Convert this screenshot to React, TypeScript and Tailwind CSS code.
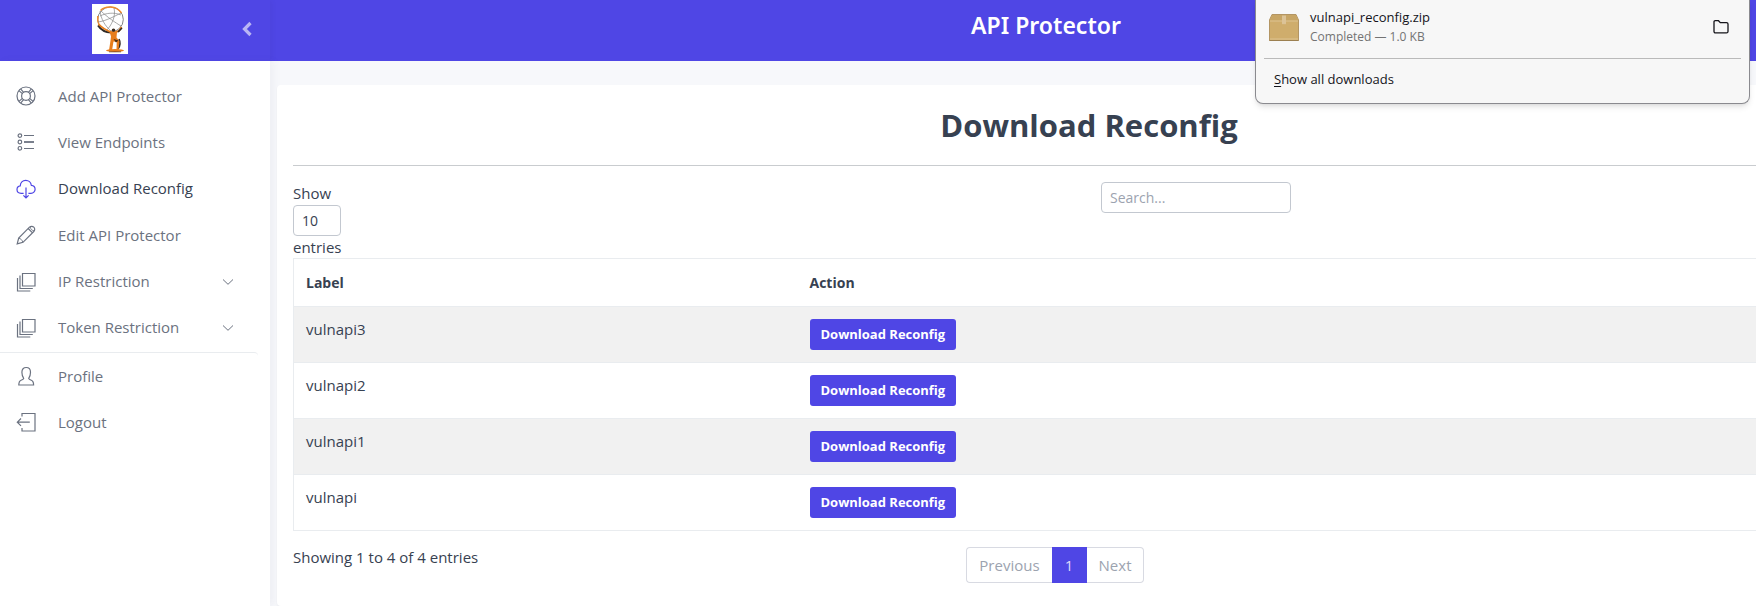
import React from "react";

type IconProps = { className?: string };

function Svg({ className = "", children }: IconProps & { children: React.ReactNode }) {
  return (
    <svg viewBox="0 0 20 20" className={`h-5 w-5 shrink-0 ${className}`} fill="none" stroke="currentColor" strokeWidth="1.2" aria-hidden="true">
      {children}
    </svg>
  );
}

const LifebuoyIcon = () => (
  <Svg>
    <circle cx="10" cy="10" r="9" />
    <circle cx="10" cy="10" r="4.4" />
    <path d="M2.9 4.6 6.4 7.6M4.6 2.9 7.6 6.3M15.4 2.9 12.4 6.3M17.1 4.6 13.6 7.6M2.9 15.4 6.4 12.4M4.6 17.1 7.6 13.7M15.4 17.1 12.4 13.7M17.1 15.4 13.6 12.4" />
  </Svg>
);

const ListIcon = () => (
  <Svg>
    <circle cx="3.9" cy="3.6" r="1.8" />
    <circle cx="3.9" cy="10" r="1.8" />
    <circle cx="3.9" cy="16.3" r="1.8" />
    <path d="M8 3.5h10M8 16.5h10" />
    <path d="M8 10h10" strokeWidth="1.8" />
  </Svg>
);

const CloudDownloadIcon = () => (
  <Svg className="text-[#4f46e5]">
    <path d="M7.6 14.3H5.2C2.8 14.3 1 12.7 1 10.5c0-2 1.5-3.5 3.3-3.7C4.3 3.7 6.6 1.4 9.7 1.4c2.9 0 5.3 2.1 5.6 4.9 2.2.2 3.8 1.9 3.8 4 0 2.3-1.8 4-4.1 4h-2.6" />
    <path d="M10 8.5v10.3M7.4 16.3 10 18.9l2.6-2.6" />
  </Svg>
);

const PencilIcon = () => (
  <Svg>
    <path d="M1.2 18.8 2.7 13 13.5 2.2a3 3 0 0 1 4.3 4.3L7 17.3zM12.2 3.5l4.3 4.3" />
    <path d="M14.3 2.1c.3 2 1.5 3.3 3.6 3.6" strokeWidth=".9" />
    <path d="M2.8 13.2c1.8.3 3.5 1.9 4 4" strokeWidth=".9" />
  </Svg>
);

const StackIcon = () => (
  <Svg>
    <path d="M6.500 1.500h12.500v12.500h-12.500zM4 3.500v13h12.800M1.500 6v13h12.800" />
  </Svg>
);

const UserIcon = () => (
  <Svg>
    <path d="M7.700 12.300C6.500 10.900 5.900 9 5.900 6.300 5.900 3.200 7.500 1.500 10.200 1.500s4.300 1.700 4.300 4.800c0 2.700-.6 4.600-1.800 6 .2.900 1 1.300 2.600 1.900 1.700.6 2.300 1.300 2.300 4.800H2.800c0-3.500.6-4.200 2.300-4.800 1.600-.6 2.400-1 2.600-1.900z" />
  </Svg>
);

const LogoutIcon = () => (
  <Svg>
    <path d="M6 4.500v-3h13v17.500H6v-3M1.300 10.200h12.500M5 6.500 1.300 10.200 5 13.900" />
  </Svg>
);

const Logo = () => (
  <svg viewBox="0 0 36 50" className="h-[50px] w-9" role="img" aria-label="Atlas logo">
    <rect width="36" height="50" fill="#fff" />
    <g fill="none">
      <ellipse cx="18.500" cy="15.500" rx="12.800" ry="12.500" stroke="#777" strokeWidth=".9" />
      <path d="M5.800 12C5.300 16 6 19 7.500 22M8.500 6.500C13 2 24 1 29.500 9" stroke="#f08a2c" strokeWidth="1.500" />
      <path d="M6 18C14 17 23 12 29 9M9 7C15 13 24 19 29 22M14 27C20 21 24 12 22 4M8 7C9 15 13 22 19 27M8 12C14 9 22 8 29 11" stroke="#858585" strokeWidth=".7" />
      <path d="M6 21.500C9 26 14 28.500 19 28.500" stroke="#2f2a26" strokeWidth="2" />
      <path d="M7 20.500C10 24 15 26.500 20 28.500M22 28.500 27 27 29.500 23" stroke="#e87d1b" strokeWidth="1.900" />
      <path d="M26 28 30 24M27 35C28.500 38 28 42 26 45" stroke="#2f2a26" strokeWidth="1.600" />
    </g>
    <circle cx="21.500" cy="26.300" r="1.800" fill="#3a2a1d" />
    <path d="M17.500 27.500 25 28l-.5 5.500 3 3.500-1 9h-2l.2-8-3.200-.5-1.500 9h-3l1.500-10 .5-4z" fill="#e87d1b" />
    <path d="M21.500 35 26.500 36.500l-2.500 2z" fill="#4a2e17" />
    <ellipse cx="23" cy="46.500" rx="9" ry="1.500" fill="#e87d1b" />
    <path d="M17 47.800h12" stroke="#6a3a15" strokeWidth=".8" />
  </svg>
);

const PackageIcon = () => (
  <svg viewBox="0 0 30 27" className="h-[27px] w-[30px] shrink-0" aria-hidden="true">
    <path d="M3 .5h24l2.500 5.500v20.500H.5V6z" fill="#cfad6c" stroke="#b39563" strokeWidth="1" />
    <path d="M3 1h24l2 5.500H1z" fill="#c7a565" />
    <path d="M1 7h28M1 25h28" stroke="#ddc391" strokeWidth="1" />
    <path d="M13 1.500h4v9l-1-.8-1 .8-1-.8-1 .8z" fill="#dcc397" />
    <path d="M.5 26.500h29" stroke="#9c8051" />
  </svg>
);

const FolderIcon = () => (
  <svg viewBox="0 0 16 16" className="h-4 w-4" fill="none" stroke="#15141a" strokeWidth="1.300" aria-hidden="true">
    <path d="M1 3c0-.8.500-1.300 1.300-1.300h3.200L7.300 3.600h6.200c.9 0 1.500.6 1.500 1.500v7.300c0 .9-.6 1.500-1.500 1.500h-11c-.9 0-1.500-.6-1.500-1.500z" />
  </svg>
);

const Chevron = () => (
  <svg viewBox="0 0 12 8" className="ml-auto h-2 w-3" fill="none" stroke="currentColor" strokeWidth="1" aria-hidden="true">
    <path d="M1 1.500 6 6.300 11 1.500" />
  </svg>
);

type NavEntry = { label: string; icon: React.ReactNode; active?: boolean; expandable?: boolean };

const mainNav: NavEntry[] = [
  { label: "Add API Protector", icon: <LifebuoyIcon /> },
  { label: "View Endpoints", icon: <ListIcon /> },
  { label: "Download Reconfig", icon: <CloudDownloadIcon />, active: true },
  { label: "Edit API Protector", icon: <PencilIcon /> },
  { label: "IP Restriction", icon: <StackIcon />, expandable: true },
  { label: "Token Restriction", icon: <StackIcon />, expandable: true },
];

const accountNav: NavEntry[] = [
  { label: "Profile", icon: <UserIcon /> },
  { label: "Logout", icon: <LogoutIcon /> },
];

function NavItem({ label, icon, active, expandable }: NavEntry) {
  return (
    <li>
      <a
        href="#"
        aria-current={active ? "page" : undefined}
        className={`flex h-[46px] items-center pr-9 pl-4 ${active ? "text-[#374151]" : "text-[#6b7280]"}`}
      >
        {icon}
        <span className="ml-[22px]">{label}</span>
        {expandable && <Chevron />}
      </a>
    </li>
  );
}

const rows = ["vulnapi3", "vulnapi2", "vulnapi1", "vulnapi"];

function DownloadsPanel() {
  return (
    <section
      aria-label="Downloads"
      className="absolute top-0 right-[6px] z-10 w-[495px] rounded-b-lg border border-t-0 border-[#8a8a8f] bg-[#f7f7f7] px-2 text-[13px] text-[#15141a] shadow-md"
    >
      <div className="flex h-[59px] items-center border-b border-[#bababa] pr-3 pb-1 pl-[5px]">
        <PackageIcon />
        <div className="ml-[11px] leading-[19px]">
          <p>vulnapi_reconfig.zip</p>
          <p className="text-[12px] leading-[19px] text-[#737373]">Completed — 1.0 KB</p>
        </div>
        <button type="button" aria-label="Show in folder" className="ml-auto">
          <FolderIcon />
        </button>
      </div>
      <button type="button" className="block h-11 px-[10px] pb-1">
        <span className="underline underline-offset-2">S</span>how all downloads
      </button>
    </section>
  );
}

export default function App() {
  return (
    <div className="relative flex min-h-screen flex-col overflow-hidden bg-[#f7f8fb] font-['Open_Sans',sans-serif] text-[15px] leading-[21px] text-[#374151]">
      <header className="flex h-[61px] bg-[#4f46e5] text-white">
        <div className="flex w-[270px] shrink-0 items-center justify-between pr-[17px] pl-[92px] shadow-[2px_0_6px_rgba(0,0,0,0.04)]">
          <div className="-mt-1">
            <Logo />
          </div>
          <button type="button" aria-label="Collapse sidebar" className="-mt-1 text-[#b9b5f4]">
            <svg viewBox="0 0 12 16" className="h-4 w-3" fill="none" stroke="currentColor" strokeWidth="3.200" aria-hidden="true">
              <path d="M9.500 2 3.500 8l6 6" />
            </svg>
          </button>
        </div>
        <h2 className="flex-1 pt-[7px] pl-[66px] text-center font-['Noto_Sans',sans-serif] text-[23px] leading-9 font-semibold">API Protector</h2>
      </header>

      <div className="flex flex-1">
        <nav aria-label="Main" className="w-[270px] shrink-0 bg-white pt-3 shadow-[4px_0_8px_rgba(70,80,120,0.05)]">
          <ul className="flex min-h-[278px] flex-col justify-between">
            {mainNav.map((item) => (
              <NavItem key={item.label} {...item} />
            ))}
          </ul>
          <ul className="mt-px mr-3 rounded-tr border-t border-[#e9ecef]">
            {accountNav.map((item) => (
              <NavItem key={item.label} {...item} />
            ))}
          </ul>
        </nav>

        <main className="flex min-w-0 flex-1 pt-6 pl-[7px]">
          <div className="-mr-[145px] flex-1 rounded bg-white px-4 shadow-xs">
            <h1 className="border-b border-[#c9cccf] pt-4 pb-[15px] text-center text-[31px] leading-[49px] font-bold">Download Reconfig</h1>

            <div className="-mx-3 mt-4 grid grid-cols-2">
              <div className="px-3">
                <label className="flex w-12 flex-col">
                  <span className="leading-[23px]">Show</span>
                  <select className="h-[31px] w-12 appearance-none rounded border border-[#c3c8d0] bg-white px-2 text-[14px]" defaultValue="10">
                    <option>10</option>
                    <option>25</option>
                    <option>50</option>
                  </select>
                  <span className="leading-[22px]">entries</span>
                </label>
              </div>
              <div className="px-3">
                <input
                  type="search"
                  aria-label="Search"
                  placeholder="Search..."
                  className="block h-[31px] w-[190px] rounded border border-[#c3c8d0] px-2 text-[14px] placeholder:text-[#9ca3af]"
                />
              </div>
            </div>

            <table className="w-full table-fixed border-collapse border border-[#e9ecef] text-left">
              <thead>
                <tr className="h-12">
                  <th className="w-[504px] px-3 text-[14px] font-bold">Label</th>
                  <th className="px-3 text-[14px] font-bold">Action</th>
                </tr>
              </thead>
              <tbody>
                {rows.map((label) => (
                  <tr key={label} className="border-t border-[#e9ecef] odd:bg-[#f1f1f1]">
                    <td className="p-3 align-top">{label}</td>
                    <td className="p-3 align-top">
                      <button type="button" className="block h-[31px] rounded-[3px] bg-[#4f46e5] px-[11px] text-[13px] font-bold text-white">
                        Download Reconfig
                      </button>
                    </td>
                  </tr>
                ))}
              </tbody>
            </table>

            <div className="-mx-3 mt-4 grid grid-cols-[5fr_7fr]">
              <p className="px-3">Showing 1 to 4 of 4 entries</p>
              <div className="flex px-3">
                <button type="button" disabled className="h-9 rounded-l border border-r-0 border-[#d8dae2] px-3 text-[#9ca3af]">
                  Previous
                </button>
                <button type="button" aria-current="page" className="h-9 w-[35px] bg-[#4f46e5] text-[#dcdaf9]">
                  1
                </button>
                <button type="button" disabled className="h-9 rounded-r border border-l-0 border-[#d8dae2] px-3 text-[#9ca3af]">
                  Next
                </button>
              </div>
            </div>
          </div>
        </main>
      </div>
      <DownloadsPanel />
    </div>
  );
}
